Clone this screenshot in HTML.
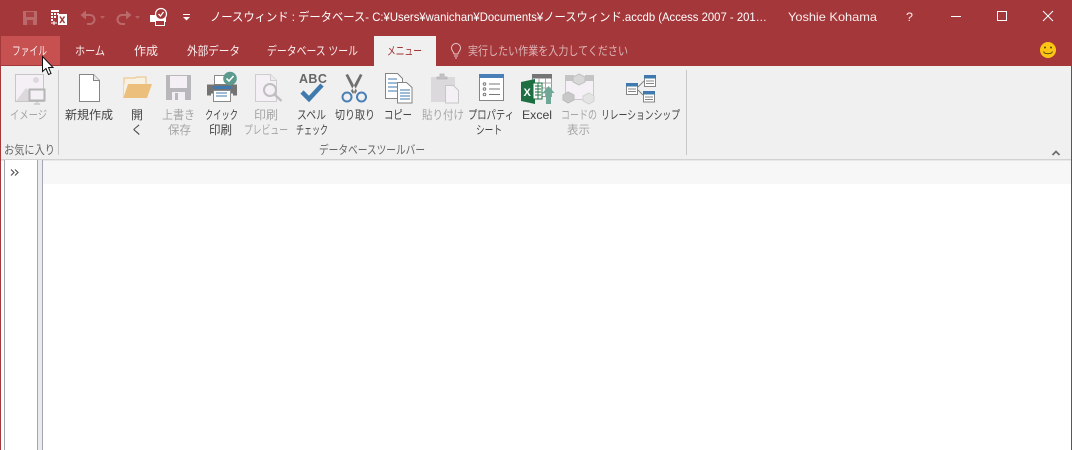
<!DOCTYPE html>
<html lang="ja">
<head>
<meta charset="utf-8">
<title>Access</title>
<style>
html,body{margin:0;padding:0;background:#fff;width:1072px;height:450px;overflow:hidden}
svg{display:block}
text{font-family:"Liberation Sans","Noto Sans CJK JP",sans-serif;font-size:12px}
.w{fill:#fff}
.p{fill:#fbeeee}
.d{fill:#444}
.g{fill:#a6a6a6}
</style>
</head>
<body>
<svg width="1072" height="450" viewBox="0 0 1072 450" xmlns="http://www.w3.org/2000/svg">
<!-- backgrounds -->
<rect width="1072" height="450" fill="#fff"/>
<rect width="1072" height="66" fill="#a4373a"/>
<rect x="0" y="66" width="1072" height="93" fill="#f0f0f0"/>
<rect x="0" y="159" width="1072" height="1.500" fill="#d2d2d2"/>
<rect x="43" y="161" width="1028" height="23" fill="#f7f7f7"/>
<rect x="0" y="66" width="1" height="384" fill="#a4373a"/>
<rect x="1071" y="66" width="1" height="384" fill="#a4373a"/>
<!-- file tab / active tab -->
<rect x="1" y="36" width="59" height="29" fill="#c75050"/>
<rect x="374" y="36" width="62" height="30" fill="#f0f0f0"/>

<!-- QAT -->
<rect x="23" y="11" width="14" height="14" fill="#bb6a6c"/>
<rect x="26" y="12" width="8" height="5" fill="#a94044"/>
<rect x="27" y="20" width="6" height="5" fill="#a94044"/>
<g fill="none" stroke="#bb6a6c" stroke-width="2">
<path d="M84 15h6a4.500 4.500 0 0 1 0 9h-3"/>
<path d="M128 15h-6a4.500 4.500 0 0 0 0 9h3"/>
</g>
<g fill="#bb6a6c">
<path d="M86 10.500v9l-5.500-4.500z"/>
<path d="M126 10.500v9l5.500-4.500z"/>
<path d="M100 16h5l-2.500 3zM135 16h5l-2.500 3z" opacity=".8"/>
</g>
<path d="M51 10h8v2h-8zM51 13h2v2h-2zM54 13h2v2h-2zM57 13h2v2h-2zM51 16h2v2h-2zM54 16h2v2h-2zM51 19h2v2h-2z" fill="#fff"/>
<rect x="58" y="14" width="9" height="11" fill="#fff"/>
<path d="M60 16.500l4.500 6.500M64.500 16.500l-4.500 6.500" stroke="#a4373a" stroke-width="1.500"/>
<path d="M51 23h6M54 21v4" stroke="#fff" stroke-width="1"/>
<rect x="150" y="15" width="16" height="7" fill="#fff"/>
<rect x="155.500" y="20.500" width="9" height="5" fill="#a4373a" stroke="#fff" stroke-width="1"/>
<circle cx="161" cy="14" r="5.500" fill="#a4373a" stroke="#fff" stroke-width="1.200"/>
<path d="M158.500 14l2 2 3-4" fill="none" stroke="#fff" stroke-width="1.300"/>
<rect x="183" y="14" width="7" height="1" fill="#fff"/>
<path d="M183 17h7l-3.500 3.500z" fill="#fff"/>

<!-- title bar text -->
<text x="210" y="21" class="w" textLength="557" lengthAdjust="spacingAndGlyphs">ノースウィンド : データベース- C:¥Users¥wanichan¥Documents¥ノースウィンド.accdb (Access 2007 - 201…</text>
<text x="788" y="21" class="p" textLength="89" lengthAdjust="spacingAndGlyphs">Yoshie Kohama</text>
<text x="906" y="21" class="p" textLength="7" lengthAdjust="spacingAndGlyphs">?</text>
<rect x="951" y="16" width="10" height="1" fill="#fff"/>
<rect x="997.500" y="11.500" width="9" height="9" fill="none" stroke="#fff"/>
<path d="M1043 11l10 10M1053 11l-10 10" stroke="#fff" stroke-width="1"/>

<!-- tabs -->
<text x="12" y="55" class="p" textLength="35" lengthAdjust="spacingAndGlyphs">ファイル</text>
<text x="75" y="55" class="p" textLength="30" lengthAdjust="spacingAndGlyphs">ホーム</text>
<text x="134" y="55" class="p" textLength="24" lengthAdjust="spacingAndGlyphs">作成</text>
<text x="187" y="55" class="p" textLength="53" lengthAdjust="spacingAndGlyphs">外部データ</text>
<text x="267" y="55" class="p" textLength="91" lengthAdjust="spacingAndGlyphs">データベース ツール</text>
<text x="387" y="55" fill="#a4373a" textLength="35" lengthAdjust="spacingAndGlyphs">メニュー</text>
<g fill="none" stroke="#e8c8c8" stroke-width="1">
<path d="M454 54c0-2-2.500-3-2.500-6a4.500 4.500 0 0 1 9 0c0 3-2.500 4-2.500 6z"/>
<path d="M454 56h4M455 58h2"/>
</g>
<text x="468" y="55" fill="#dcb6b7" textLength="160" lengthAdjust="spacingAndGlyphs">実行したい作業を入力してください</text>
<!-- smiley -->
<circle cx="1048" cy="50" r="8" fill="#fdc513"/>
<circle cx="1045" cy="47.500" r="1" fill="#5a4a10"/>
<circle cx="1051" cy="47.500" r="1" fill="#5a4a10"/>
<path d="M1043.500 51.500c1 3 8 3 9 0" fill="none" stroke="#5a4a10" stroke-width="1"/>

<!-- separators -->
<rect x="58" y="70" width="1" height="85" fill="#c8c8c8"/>
<rect x="686" y="70" width="1" height="85" fill="#c8c8c8"/>

<!-- image icon -->
<rect x="15.500" y="74.500" width="28" height="27" fill="#f4f0f5" stroke="#c6c6c6"/>
<circle cx="36" cy="80" r="3" fill="#dcd8dc"/>
<path d="M16 101l10-13 5 5v8z" fill="#dcd8dc"/>
<rect x="29.500" y="89.500" width="15" height="11" fill="#f4f0f5" stroke="#b5b5b5" stroke-width="2"/>
<path d="M37 101v2M34 104h6" stroke="#b5b5b5"/>

<!-- new -->
<path d="M79.500 74.500h14l6 6v21h-20z" fill="#fff" stroke="#858585"/>
<path d="M93.500 74.500v6h6" fill="#e8e8e8" stroke="#858585"/>

<!-- open -->
<path d="M124 78h11l2-1h9v20h-22z" fill="#f7f1e4" stroke="#ecc07c"/>
<path d="M123 98l5-14h24l-5 14z" fill="#ecc07c"/>
<path d="M124 84h4l-4 12z" fill="#f7f1e4"/>

<!-- save -->
<rect x="166" y="75" width="25" height="25" fill="#b8b8ba"/>
<rect x="170" y="76" width="17" height="12" fill="#f3eff4"/>
<rect x="172" y="92" width="13" height="8" fill="#f3eff4"/>
<rect x="175" y="93" width="3" height="7" fill="#b8b8ba"/>

<!-- quick print -->
<rect x="214.500" y="75.500" width="14" height="9" fill="#fff" stroke="#8a8a8a"/>
<path d="M207 84.500h30v11h-4v-2h-22v2h-4z" fill="#737373"/>
<rect x="213" y="86" width="18" height="3" fill="#3f79ad"/>
<rect x="213.500" y="90.500" width="17" height="11" fill="#fff" stroke="#8a8a8a"/>
<path d="M216 93h11" stroke="#3f79ad"/><path d="M216 96h11" stroke="#3f79ad"/>
<circle cx="230" cy="78.500" r="6.800" fill="#5b9a8c"/>
<path d="M226.500 78.500l2.500 2.500 4.500-5" fill="none" stroke="#fff" stroke-width="1.600"/>

<!-- print preview -->
<path d="M255.500 74.500h15l6 6v21h-21z" fill="#f4f0f5" stroke="#cdcdcd"/>
<path d="M270.500 74.500v6h6" fill="#ececec" stroke="#cdcdcd"/>
<circle cx="270" cy="90" r="6" fill="#f4f0f5" stroke="#bfbfbf" stroke-width="2"/>
<path d="M274.500 94.500l7 6.500" stroke="#bfbfbf" stroke-width="2.500"/>

<!-- spell -->
<text x="299" y="83" style="font-size:12.500px;font-weight:bold;letter-spacing:.4px" fill="#666">ABC</text>
<path d="M302 92l7 7 13-14" fill="none" stroke="#3f79ad" stroke-width="4.500"/>

<!-- cut -->
<path d="M345.500 75l2.500-1 9 17-2 3zM362.500 75l-2.500-1-9 17 2 3z" fill="#6f6f6f"/>
<circle cx="347" cy="97" r="4.500" fill="#f0f0f0" stroke="#4a80b5" stroke-width="2"/>
<circle cx="361.500" cy="97" r="4.500" fill="#f0f0f0" stroke="#4a80b5" stroke-width="2"/>

<!-- copy -->
<path d="M385.500 73.500h12l5 5v20h-17z" fill="#fff" stroke="#858585"/>
<path d="M388 79h9M388 83h11M388 87h11M388 91h11" stroke="#3f79ad"/>
<path d="M397.500 82.500h9l5.500 5v15.500h-14.500z" fill="#fff" stroke="#858585"/>
<path d="M400 90h10M400 93h10M400 96h10M400 99h10" stroke="#3f79ad"/>

<!-- paste -->
<rect x="431" y="77" width="24" height="25" fill="#dcd9dc"/>
<path d="M437 79v-2h3v-3h4v3h3v2z" fill="#c4c2c4" stroke="#b4b4b4" stroke-width=".8"/>
<path d="M445.500 85.500h8l5 5v12.500h-13z" fill="#f4f0f5" stroke="#c6c6c6"/>

<!-- property sheet -->
<rect x="479.500" y="74.500" width="24" height="26" fill="#fff" stroke="#858585"/>
<rect x="479" y="74" width="25" height="4" fill="#4a7fb8"/>
<circle cx="484.500" cy="84" r="1.300" fill="#fff" stroke="#777"/>
<circle cx="484.500" cy="89" r="1.300" fill="#fff" stroke="#777"/>
<circle cx="484.500" cy="94.500" r="1.300" fill="#fff" stroke="#777"/>
<path d="M489 84h11M489 89h11M489 94.500h11" stroke="#777"/>

<!-- excel -->
<rect x="532.500" y="74.500" width="19" height="22" fill="#fff" stroke="#9a9a9a"/>
<rect x="532" y="74" width="20" height="4.500" fill="#757575"/>
<path d="M532 83h20M532 88h20M532 93h20M539 78v18M545.500 78v18" stroke="#a6a6a6"/>
<path d="M521 82l14-3v25l-14-3z" fill="#1d6f42"/>
<rect x="533" y="83" width="9" height="16" fill="#fff" stroke="#1d6f42"/>
<path d="M535 86h6M535 89h6M535 92h6M535 95h6M538 83v16" stroke="#1d6f42" stroke-width=".9"/>
<text x="523.500" y="96" style="font-size:11px;font-weight:bold" fill="#fff">X</text>
<path d="M546 104v-11h-3.500l6-7 6 7H551v11z" fill="#6ea795"/>

<!-- code view -->
<rect x="565.500" y="77.500" width="28" height="22" fill="#f4f0f5" stroke="#c9c9c9"/>
<rect x="565" y="75" width="9" height="6" fill="#c4c4c4"/><rect x="585" y="75" width="9" height="6" fill="#c4c4c4"/>
<path d="M579 74l6 3v5l-6 3-6-3v-5z" fill="#d8d8d8" stroke="#c0c0c0"/>
<path d="M568 92l6 3v5l-6 3-5-3v-5z" fill="#c8c8c8" stroke="#bcbcbc"/>
<path d="M589 93l5 3v5l-5 3-6-3v-5z" fill="#e4e4e4" stroke="#d2d2d2"/>

<!-- relationships -->
<rect x="626.500" y="83.500" width="11" height="11" fill="#fff" stroke="#858585"/>
<rect x="626" y="83" width="12" height="3.500" fill="#3f79ad"/>
<path d="M628 89h8M628 91.500h8" stroke="#858585"/>
<rect x="644.500" y="75.500" width="11" height="11" fill="#fff" stroke="#858585"/>
<rect x="644" y="75" width="12" height="3.500" fill="#3f79ad"/>
<path d="M646 81h8M646 83.500h8" stroke="#858585"/>
<rect x="643.500" y="91.500" width="11" height="10.500" fill="#fff" stroke="#858585"/>
<rect x="643" y="91" width="12" height="3.500" fill="#3f79ad"/>
<path d="M645 97h8M645 99.500h8" stroke="#858585"/>
<path d="M638 87l6-6M638 90l5 5" stroke="#858585"/>

<!-- ribbon labels -->
<text x="10" y="119" class="g" textLength="37" lengthAdjust="spacingAndGlyphs">イメージ</text>
<text x="65" y="119" class="d" textLength="48" lengthAdjust="spacingAndGlyphs">新規作成</text>
<text x="131" y="119" class="d" textLength="12" lengthAdjust="spacingAndGlyphs">開</text>
<text x="131" y="134" class="d" textLength="12" lengthAdjust="spacingAndGlyphs">く</text>
<text x="162" y="119" class="g" textLength="33" lengthAdjust="spacingAndGlyphs">上書き</text>
<text x="168" y="134" class="g" textLength="23" lengthAdjust="spacingAndGlyphs">保存</text>
<text x="205" y="119" class="d" textLength="33" lengthAdjust="spacingAndGlyphs">クイック</text>
<text x="209" y="134" class="d" textLength="23" lengthAdjust="spacingAndGlyphs">印刷</text>
<text x="254" y="119" class="g" textLength="24" lengthAdjust="spacingAndGlyphs">印刷</text>
<text x="244" y="134" class="g" textLength="44" lengthAdjust="spacingAndGlyphs">プレビュー</text>
<text x="297" y="119" class="d" textLength="29" lengthAdjust="spacingAndGlyphs">スペル</text>
<text x="296" y="134" class="d" textLength="32" lengthAdjust="spacingAndGlyphs">チェック</text>
<text x="335" y="119" class="d" textLength="40" lengthAdjust="spacingAndGlyphs">切り取り</text>
<text x="384" y="119" class="d" textLength="28" lengthAdjust="spacingAndGlyphs">コピー</text>
<text x="422" y="119" class="g" textLength="42" lengthAdjust="spacingAndGlyphs">貼り付け</text>
<text x="468" y="119" class="d" textLength="46" lengthAdjust="spacingAndGlyphs">プロパティ</text>
<text x="476" y="134" class="d" textLength="26" lengthAdjust="spacingAndGlyphs">シート</text>
<text x="522" y="119" class="d" textLength="30" lengthAdjust="spacingAndGlyphs">Excel</text>
<text x="561" y="119" class="g" textLength="36" lengthAdjust="spacingAndGlyphs">コードの</text>
<text x="567" y="134" class="g" textLength="23" lengthAdjust="spacingAndGlyphs">表示</text>
<text x="601" y="119" class="d" textLength="79" lengthAdjust="spacingAndGlyphs">リレーションシップ</text>
<text x="4" y="154" fill="#666" textLength="51" lengthAdjust="spacingAndGlyphs">お気に入り</text>
<text x="319" y="154" fill="#666" textLength="106" lengthAdjust="spacingAndGlyphs">データベースツールバー</text>

<!-- collapse chevron -->
<path d="M1052.500 155l3.500-3.500 3.500 3.500" fill="none" stroke="#6f6f6f" stroke-width="1.800"/>

<!-- nav pane -->
<rect x="4" y="160" width="34" height="290" fill="#fff"/>
<rect x="4" y="160" width="1" height="290" fill="#a2a7b2"/>
<rect x="37" y="160" width="6" height="290" fill="#eaebef"/>
<rect x="37" y="160" width="1" height="290" fill="#a2a7b2"/>
<rect x="42" y="160" width="1" height="290" fill="#a2a7b2"/>
<path d="M11 169.500l3 3-3 3M15 169.500l3 3-3 3" fill="none" stroke="#555" stroke-width="1.200"/>

<!-- cursor -->
<path d="M42.500 56.500v15l3.500-3 2.500 6 2.500-1-2.500-6h4.500z" fill="#fff" stroke="#111" stroke-width="1"/>
</svg>
</body>
</html>
